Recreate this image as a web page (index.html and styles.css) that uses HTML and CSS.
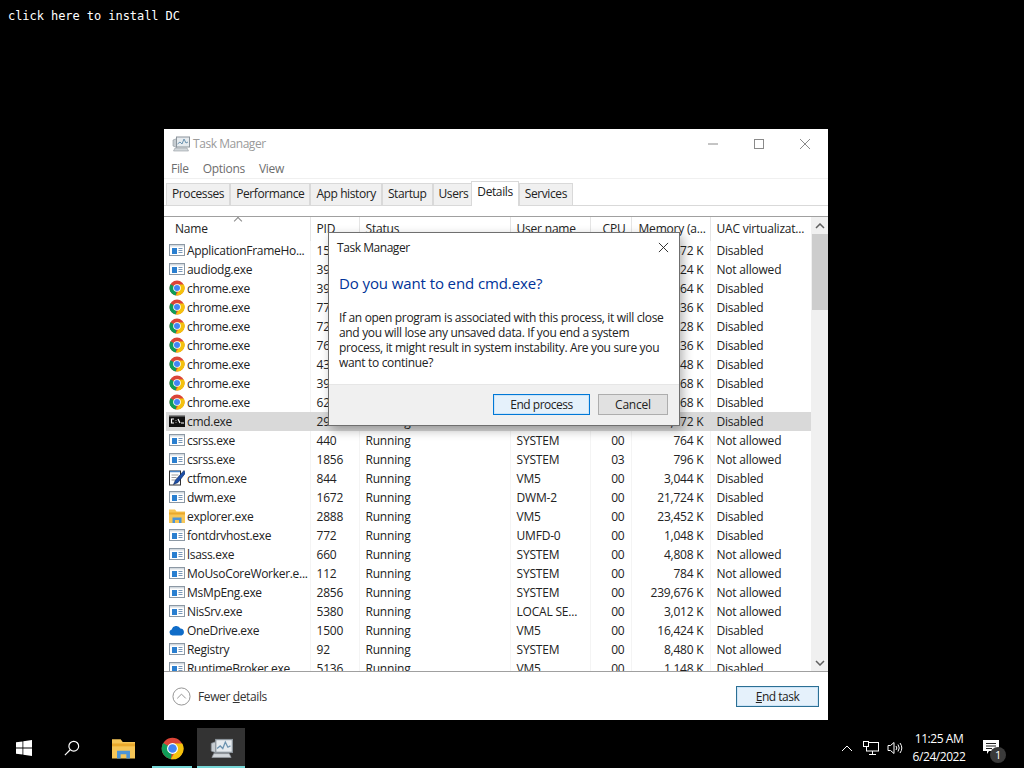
FILE: index.html
```html
<!DOCTYPE html>
<html lang="en">
<head>
  <meta charset="UTF-8" />
  <title>Task Manager</title>
  <link rel="stylesheet" href="styles.css">
</head>
<body>

  <!-- Icons used by the process list and taskbar -->
  <svg class="icon-defs" width="0" height="0">
    <symbol id="i-app" viewBox="0 0 16 16">
      <rect x="0.5" y="2.5" width="15" height="11" fill="#fff" stroke="#8c98a4"/>
      <rect x="1" y="3" width="14" height="1.5" fill="#d3dae0"/>
      <rect x="3" y="6" width="5" height="6" fill="#2a7fd0"/>
      <path d="M9.5 6.5h4M9.5 8.5h4M9.5 10.5h4" stroke="#7a98b8" stroke-width="1"/>
    </symbol>
    <symbol id="i-chrome" viewBox="0 0 16 16">
      <circle cx="8" cy="8" r="7.5" fill="#db4437"/>
      <path d="M8 8L1.5 4.2A7.5 7.5 0 0 0 6.8 15.4z" fill="#0f9d58"/>
      <path d="M8 4.5h6.8A7.5 7.5 0 0 1 6.8 15.4L10.5 9z" fill="#f4c20d"/>
      <circle cx="8" cy="8" r="3.8" fill="#fff"/>
      <circle cx="8" cy="8" r="3" fill="#4285f4"/>
    </symbol>
    <symbol id="i-cmd" viewBox="0 0 16 16">
      <rect x="0" y="2" width="16" height="12" fill="#111"/>
      <rect x="0" y="2" width="16" height="1.5" fill="#8a8a8a"/>
      <path d="M5 6H2.500v4H5M7 7v.5M7 9.500v.5M9 6l2 4M12 10h3" stroke="#fff" stroke-width="1.200" fill="none"/>
    </symbol>
    <symbol id="i-notepad" viewBox="0 0 16 16">
      <rect x="0.5" y="1" width="11" height="14" fill="#fff" stroke="#333"/>
      <path d="M1 1.500h10" stroke="#4a86c8" stroke-width="1.500"/>
      <path d="M2.500 5h7M2.500 7.500h5M2.500 10h4" stroke="#9a9a9a"/>
      <path d="M15 0.500L6.500 10l-2 4.500 4.500-2L16.500 3z" fill="#1d4fa8" stroke="#0b2558" stroke-width="0.6"/>
    </symbol>
    <symbol id="i-folder" viewBox="0 0 16 16">
      <path d="M0 1.500h6l1.500 2H16V15H0z" fill="#f6c657"/>
      <path d="M0 4.500h16v2H0z" fill="#e9a92d"/>
      <path d="M3.500 15v-5.500h9V15h-2.500v-3H6v3z" fill="#4c94d6"/>
    </symbol>
    <symbol id="i-cloud" viewBox="0 0 16 16">
      <path d="M3.500 13.500A3 3 0 0 1 2.800 7.600 4.600 4.600 0 0 1 11.400 6.500 3.600 3.600 0 0 1 12.500 13.500z" fill="#0f6cc8"/>
    </symbol>
    <symbol id="i-taskmgr" viewBox="0 0 18 18">
      <path d="M1 5l4-1.500v9L1 11z" fill="#c6ccd1" stroke="#8b949b" stroke-width="0.6"/>
      <rect x="4.500" y="2" width="13" height="10" fill="#e6ebef" stroke="#8b949b"/>
      <path d="M5.500 9l2.500-2 2 2 2-5 2 4 2-1" stroke="#6c93b0" fill="none"/>
      <path d="M3 13h12l1.500 3h-15z" fill="#d2d7db" stroke="#959ca2" stroke-width="0.6"/>
    </symbol>
  </svg>

  <p class="install-note">click here to install DC</p>

  <!-- Task Manager window -->
  <section class="window">
    <div class="titlebar">
      <svg class="title-icon"><use href="#i-taskmgr"/></svg>
      <span class="title-text">Task Manager</span>
      <div class="window-controls">
        <svg viewBox="0 0 12 12"><path d="M1 6h10"/></svg>
        <svg viewBox="0 0 12 12"><rect x="1.500" y="1.500" width="9" height="9"/></svg>
        <svg viewBox="0 0 12 12"><path d="M1 1l10 10M11 1L1 11"/></svg>
      </div>
    </div>

    <nav class="menu">
      <span>File</span>
      <span>Options</span>
      <span>View</span>
    </nav>

    <div class="tabs">
      <span class="tab">Processes</span>
      <span class="tab">Performance</span>
      <span class="tab">App history</span>
      <span class="tab">Startup</span>
      <span class="tab">Users</span>
      <span class="tab active">Details</span>
      <span class="tab">Services</span>
    </div>

    <div class="panel">
      <div class="list">
        <span class="sort-caret"></span>
        <table class="proc-table">
          <colgroup>
            <col class="c-name"><col class="c-pid"><col class="c-status"><col class="c-user"><col class="c-cpu"><col class="c-mem"><col class="c-uac">
          </colgroup>
          <thead>
            <tr>
              <th>Name</th>
              <th>PID</th>
              <th>Status</th>
              <th>User name</th>
              <th class="num">CPU</th>
              <th class="mem-head">Memory (a...</th>
              <th>UAC virtualizat...</th>
            </tr>
          </thead>
          <tbody>
            <tr><td><svg class="pi"><use href="#i-app"/></svg>ApplicationFrameHo...</td><td>1568</td><td>Running</td><td>VM5</td><td class="num">00</td><td class="num">7,672 K</td><td>Disabled</td></tr>
            <tr><td><svg class="pi"><use href="#i-app"/></svg>audiodg.exe</td><td>3968</td><td>Running</td><td>LOCAL SE...</td><td class="num">00</td><td class="num">5,224 K</td><td>Not allowed</td></tr>
            <tr><td><svg class="pi"><use href="#i-chrome"/></svg>chrome.exe</td><td>3920</td><td>Running</td><td>VM5</td><td class="num">00</td><td class="num">64,964 K</td><td>Disabled</td></tr>
            <tr><td><svg class="pi"><use href="#i-chrome"/></svg>chrome.exe</td><td>7744</td><td>Running</td><td>VM5</td><td class="num">00</td><td class="num">1,936 K</td><td>Disabled</td></tr>
            <tr><td><svg class="pi"><use href="#i-chrome"/></svg>chrome.exe</td><td>7280</td><td>Running</td><td>VM5</td><td class="num">00</td><td class="num">12,828 K</td><td>Disabled</td></tr>
            <tr><td><svg class="pi"><use href="#i-chrome"/></svg>chrome.exe</td><td>7676</td><td>Running</td><td>VM5</td><td class="num">00</td><td class="num">9,136 K</td><td>Disabled</td></tr>
            <tr><td><svg class="pi"><use href="#i-chrome"/></svg>chrome.exe</td><td>4316</td><td>Running</td><td>VM5</td><td class="num">00</td><td class="num">2,848 K</td><td>Disabled</td></tr>
            <tr><td><svg class="pi"><use href="#i-chrome"/></svg>chrome.exe</td><td>3992</td><td>Running</td><td>VM5</td><td class="num">00</td><td class="num">1,768 K</td><td>Disabled</td></tr>
            <tr><td><svg class="pi"><use href="#i-chrome"/></svg>chrome.exe</td><td>6288</td><td>Running</td><td>VM5</td><td class="num">00</td><td class="num">3,968 K</td><td>Disabled</td></tr>
            <tr class="selected"><td><svg class="pi"><use href="#i-cmd"/></svg>cmd.exe</td><td>2916</td><td>Running</td><td>VM5</td><td class="num">00</td><td class="num">1,172 K</td><td>Disabled</td></tr>
            <tr><td><svg class="pi"><use href="#i-app"/></svg>csrss.exe</td><td>440</td><td>Running</td><td>SYSTEM</td><td class="num">00</td><td class="num">764 K</td><td>Not allowed</td></tr>
            <tr><td><svg class="pi"><use href="#i-app"/></svg>csrss.exe</td><td>1856</td><td>Running</td><td>SYSTEM</td><td class="num">03</td><td class="num">796 K</td><td>Not allowed</td></tr>
            <tr><td><svg class="pi"><use href="#i-notepad"/></svg>ctfmon.exe</td><td>844</td><td>Running</td><td>VM5</td><td class="num">00</td><td class="num">3,044 K</td><td>Disabled</td></tr>
            <tr><td><svg class="pi"><use href="#i-app"/></svg>dwm.exe</td><td>1672</td><td>Running</td><td>DWM-2</td><td class="num">00</td><td class="num">21,724 K</td><td>Disabled</td></tr>
            <tr><td><svg class="pi"><use href="#i-folder"/></svg>explorer.exe</td><td>2888</td><td>Running</td><td>VM5</td><td class="num">00</td><td class="num">23,452 K</td><td>Disabled</td></tr>
            <tr><td><svg class="pi"><use href="#i-app"/></svg>fontdrvhost.exe</td><td>772</td><td>Running</td><td>UMFD-0</td><td class="num">00</td><td class="num">1,048 K</td><td>Disabled</td></tr>
            <tr><td><svg class="pi"><use href="#i-app"/></svg>lsass.exe</td><td>660</td><td>Running</td><td>SYSTEM</td><td class="num">00</td><td class="num">4,808 K</td><td>Not allowed</td></tr>
            <tr><td><svg class="pi"><use href="#i-app"/></svg>MoUsoCoreWorker.e...</td><td>112</td><td>Running</td><td>SYSTEM</td><td class="num">00</td><td class="num">784 K</td><td>Not allowed</td></tr>
            <tr><td><svg class="pi"><use href="#i-app"/></svg>MsMpEng.exe</td><td>2856</td><td>Running</td><td>SYSTEM</td><td class="num">00</td><td class="num">239,676 K</td><td>Not allowed</td></tr>
            <tr><td><svg class="pi"><use href="#i-app"/></svg>NisSrv.exe</td><td>5380</td><td>Running</td><td>LOCAL SE...</td><td class="num">00</td><td class="num">3,012 K</td><td>Not allowed</td></tr>
            <tr><td><svg class="pi"><use href="#i-cloud"/></svg>OneDrive.exe</td><td>1500</td><td>Running</td><td>VM5</td><td class="num">00</td><td class="num">16,424 K</td><td>Disabled</td></tr>
            <tr><td><svg class="pi"><use href="#i-app"/></svg>Registry</td><td>92</td><td>Running</td><td>SYSTEM</td><td class="num">00</td><td class="num">8,480 K</td><td>Not allowed</td></tr>
            <tr><td><svg class="pi"><use href="#i-app"/></svg>RuntimeBroker.exe</td><td>5136</td><td>Running</td><td>VM5</td><td class="num">00</td><td class="num">1,148 K</td><td>Disabled</td></tr>
          </tbody>
        </table>
      </div>

      <div class="scrollbar">
        <svg viewBox="0 0 10 6"><path d="M1 5l4-4 4 4"/></svg>
        <div class="track"><div class="thumb"></div></div>
        <svg viewBox="0 0 10 6"><path d="M1 1l4 4 4-4"/></svg>
      </div>
    </div>

    <div class="window-footer">
      <div class="fewer">
        <svg viewBox="0 0 20 20"><circle cx="10" cy="10" r="9"/><path d="M5.500 12l4.500-4.500 4.500 4.500"/></svg>
        <span>Fewer <u>d</u>etails</span>
      </div>
      <button class="btn btn-default btn-end"><u>E</u>nd task</button>
    </div>
  </section>

  <!-- Confirm dialog -->
  <section class="dialog">
    <div class="dialog-title">
      <span>Task Manager</span>
      <svg viewBox="0 0 12 12"><path d="M1 1l10 10M11 1L1 11"/></svg>
    </div>
    <div class="dialog-body">
      <h2>Do you want to end cmd.exe?</h2>
      <p>If an open program is associated with this process, it will close and you will lose any unsaved data. If you end a system process, it might result in system instability. Are you sure you want to continue?</p>
    </div>
    <div class="dialog-footer">
      <button class="btn btn-default btn-process">End process</button>
      <button class="btn btn-cancel">Cancel</button>
    </div>
  </section>

  <!-- Taskbar -->
  <footer class="taskbar">
    <div class="task-slot">
      <svg class="start-logo" viewBox="0 0 16 16"><path d="M0 2.300l6.500-.9v6.200H0zM7.300 1.300L16 0v7.600H7.300zM0 8.400h6.500v6.200L0 13.700zM7.300 8.400H16V16l-8.700-1.300z"/></svg>
    </div>
    <div class="task-slot slot-search">
      <svg class="search-icon" viewBox="0 0 18 18"><circle cx="11" cy="7" r="5.500"/><path d="M7 11l-6 6"/></svg>
    </div>
    <div class="task-slot"><svg class="task-icon"><use href="#i-folder"/></svg></div>
    <div class="task-slot app-running"><svg class="task-icon"><use href="#i-chrome"/></svg></div>
    <div class="task-slot app-running app-active"><svg class="task-icon"><use href="#i-taskmgr"/></svg></div>

    <div class="tray">
      <svg class="tray-caret" viewBox="0 0 12 7"><path d="M1 6l5-5 5 5"/></svg>
      <svg class="tray-net" viewBox="0 0 16 14"><rect x="3.500" y="1.500" width="12" height="8.500"/><rect x="0.500" y="0.500" width="5" height="5" class="solid"/><path d="M9.500 10v3M6 13.500h7"/></svg>
      <svg class="tray-vol" viewBox="0 0 16 14"><path d="M1 4.500h2.500L7 1.500v11l-3.500-3H1zM9 5a3 3 0 0 1 0 4M11 3.500a6 6 0 0 1 0 7M13 2a8.500 8.500 0 0 1 0 10"/></svg>
      <div class="clock">
        <span>11:25 AM</span>
        <span>6/24/2022</span>
      </div>
      <div class="notify">
        <svg viewBox="0 0 16 14"><path d="M0 0h16v11H6l-2 3v-3H0z" fill="#fff"/><path d="M3 3.500h10M3 6h10M3 8.500h6" stroke="#222"/></svg>
        <span class="notify-badge">1</span>
      </div>
    </div>
  </footer>

</body>
</html>
```

FILE: styles.css
```css
:root {
  --ui-font: "Open Sans", "Noto Sans", Arial, sans-serif;
  --line: #d9d9d9;
  --focus: #0078d7;
}

* {
  box-sizing: border-box;
}

html, body {
  height: 100%;
}

body {
  margin: 0;
  position: relative;
  overflow: hidden;
  background: #000;
  font-family: var(--ui-font);
  font-size: 12px;
  letter-spacing: -0.2px;
  color: #222;
}

.icon-defs {
  position: absolute;
}

.install-note {
  margin: 0;
  padding: 9px 8px;
  color: #fff;
  font-family: "DejaVu Sans Mono", monospace;
  font-size: 12px;
  letter-spacing: -0.06px;
  line-height: 14px;
}

/* Window */
.window {
  position: absolute;
  left: 164px;
  top: 129px;
  width: 664px;
  height: 591px;
  background: #fff;
  display: flex;
  flex-direction: column;
}

.titlebar {
  height: 29px;
  display: flex;
  align-items: center;
  padding: 0 17px 0 8px;
}

.title-icon {
  width: 18px;
  height: 18px;
  margin-right: 3px;
}

.title-text {
  color: #9a9a9a;
  letter-spacing: -0.45px;
}

.window-controls {
  margin-left: auto;
  display: flex;
  gap: 34px;
}

.window-controls svg {
  width: 12px;
  height: 12px;
  fill: none;
  stroke: #8a8a8a;
}

.menu {
  height: 21px;
  display: flex;
  align-items: center;
  gap: 14px;
  padding-left: 7px;
  color: #6d6d6d;
  letter-spacing: -0.3px;
  border-bottom: 1px solid #f0f0f0;
}

.tabs {
  height: 27px;
  display: flex;
  align-items: flex-end;
  padding-left: 2px;
  border-bottom: 1px solid var(--line);
}

.tab {
  height: 22px;
  line-height: 20px;
  padding: 0 5px;
  background: #f0f0f0;
  border: 1px solid var(--line);
  border-bottom: none;
  letter-spacing: -0.4px;
  white-space: nowrap;
}

.tab.active {
  position: relative;
  height: 25px;
  line-height: 20px;
  background: #fff;
  margin: 0 0 -1px -3px;
  padding-bottom: 3px;
}

.panel {
  margin-top: 10px;
  height: 456px;
  display: flex;
  border-top: 1px solid #a0a0a0;
  border-bottom: 1px solid #a0a0a0;
  padding-left: 2px;
}

.list {
  flex: 1;
  overflow: hidden;
  position: relative;
}

.sort-caret {
  position: absolute;
  left: 69px;
  top: 1px;
  width: 6px;
  height: 6px;
  border-left: 1px solid #888;
  border-top: 1px solid #888;
  transform: rotate(45deg);
}

.proc-table {
  width: 645px;
  border-collapse: collapse;
  table-layout: fixed;
}

.c-name { width: 144px; }
.c-pid { width: 49px; }
.c-status { width: 151px; }
.c-user { width: 80px; }
.c-cpu { width: 41px; }
.c-mem { width: 79px; }
.c-uac { width: 101px; }

.proc-table th {
  height: 24px;
  font-weight: 400;
  text-align: left;
  padding: 0 0 1px 6px;
  border-left: 1px solid #e5e5e5;
  white-space: nowrap;
  overflow: hidden;
}

.proc-table th:first-child {
  border-left: none;
  padding-left: 9px;
}

.proc-table th.mem-head {
  padding-left: 7px;
}

.proc-table td {
  height: 19px;
  padding: 0 0 0 6px;
  line-height: 19px;
  white-space: nowrap;
  overflow: hidden;
  border-left: 1px solid #f4f4f4;
}

.proc-table td:first-child {
  border-left: none;
  padding-left: 3px;
  letter-spacing: -0.3px;
}

.proc-table th.num {
  text-align: right;
  padding-right: 5px;
}

.proc-table td.num {
  text-align: right;
  padding-right: 6px;
}

.selected td {
  background: #d9d9d9;
  border-left-color: #d9d9d9;
}

.pi {
  width: 16px;
  height: 16px;
  margin-right: 2px;
  vertical-align: -3px;
}

.scrollbar {
  width: 17px;
  background: #f0f0f0;
  display: flex;
  flex-direction: column;
  align-items: center;
}

.scrollbar > svg {
  flex: none;
  width: 10px;
  height: 6px;
  margin: 6px 0 5px;
  fill: none;
  stroke: #606060;
  stroke-width: 1.500;
}

.track {
  flex: 1;
  width: 100%;
  padding-left: 1px;
}

.thumb {
  height: 76px;
  background: #cdcdcd;
}

.window-footer {
  flex: 1;
  display: flex;
  align-items: center;
  justify-content: space-between;
  padding: 0 9px 0 8px;
}

.fewer {
  display: flex;
  align-items: center;
  gap: 7px;
  color: #333;
  letter-spacing: -0.38px;
}

.fewer svg {
  width: 19px;
  height: 19px;
  fill: none;
  stroke: #8f8f8f;
}

.btn {
  height: 21px;
  padding: 0;
  font-family: var(--ui-font);
  font-size: 12px;
  letter-spacing: -0.2px;
  color: #222;
  border: 1px solid #adadad;
  background: #e1e1e1;
}

.btn-default {
  background: #e5f1fb;
  border: 1px solid var(--focus);
  box-shadow: inset 0 0 0 1px #cce4f7;
  letter-spacing: -0.5px;
}

.btn-end {
  width: 83px;
  border-color: #2b6f94;
}

.btn-process {
  width: 97px;
}

.btn-cancel {
  width: 70px;
}

/* Dialog over the window */
.dialog {
  position: absolute;
  left: 328px;
  top: 232px;
  width: 352px;
  height: 194px;
  background: #fff;
  border: 1px solid #6f6f6f;
  box-shadow: 3px 4px 10px rgba(0, 0, 0, 0.3);
  display: flex;
  flex-direction: column;
}

.dialog-title {
  height: 29px;
  display: flex;
  align-items: center;
  justify-content: space-between;
  padding: 0 10px 0 8px;
  letter-spacing: -0.45px;
}

.dialog-title svg {
  width: 11px;
  height: 11px;
  fill: none;
  stroke: #222;
}

.dialog-body {
  flex: 1;
  padding: 10px 10px 0;
}

.dialog-body h2 {
  margin: 0 0 16px;
  font-size: 15px;
  letter-spacing: -0.1px;
  line-height: 22px;
  font-weight: 400;
  color: #003399;
}

.dialog-body p {
  margin: 0;
  line-height: 15px;
  letter-spacing: -0.33px;
}

.dialog-footer {
  height: 41px;
  display: flex;
  justify-content: flex-end;
  align-items: center;
  gap: 8px;
  padding: 0 11px 2px 0;
  background: #f0f0f0;
  border-top: 1px solid #e6e6e6;
}

/* Taskbar */
.taskbar {
  position: absolute;
  left: 0;
  right: 0;
  bottom: 0;
  height: 40px;
  display: flex;
  background: #000;
}

.task-slot {
  width: 48px;
  height: 40px;
  display: flex;
  align-items: center;
  justify-content: center;
}

.slot-search {
  margin-right: 3px;
}

.task-slot + .app-running {
  margin-left: 1px;
}

.start-logo {
  width: 16px;
  height: 16px;
  fill: #fff;
}

.search-icon {
  width: 16px;
  height: 16px;
  fill: none;
  stroke: #fff;
  stroke-width: 1.300;
}

.task-icon {
  width: 23px;
  height: 23px;
}

.app-running {
  position: relative;
}

.app-running::after {
  content: "";
  position: absolute;
  left: 4px;
  right: 4px;
  bottom: 0;
  height: 2px;
  background: #76d7d7;
}

.app-active {
  background: #333;
}

.app-active::after {
  left: 0;
  right: 0;
}

.tray {
  margin-left: auto;
  padding-right: 21px;
  display: flex;
  align-items: center;
  color: #fff;
}

.tray svg {
  fill: none;
  stroke: #fff;
}

.tray-caret {
  width: 12px;
  height: 7px;
  margin-right: 10px;
}

.tray-net {
  width: 16px;
  height: 14px;
  margin-right: 8px;
}

.tray-net .solid {
  fill: #000;
}

.tray-vol {
  width: 16px;
  height: 14px;
  margin-right: 1px;
}

.clock {
  width: 70px;
  display: flex;
  flex-direction: column;
  align-items: center;
  line-height: 18px;
  letter-spacing: -0.45px;
}

.notify {
  position: relative;
  width: 24px;
  height: 14px;
  margin: -3px 0 0 5px;
  display: flex;
  justify-content: center;
}

.tray .notify svg {
  width: 16px;
  height: 14px;
  stroke: none;
}

.notify-badge {
  position: absolute;
  left: 11px;
  top: 7px;
  width: 16px;
  height: 16px;
  border-radius: 50%;
  background: #3a3a3a;
  font-size: 11px;
  line-height: 16px;
  text-align: center;
}
```
